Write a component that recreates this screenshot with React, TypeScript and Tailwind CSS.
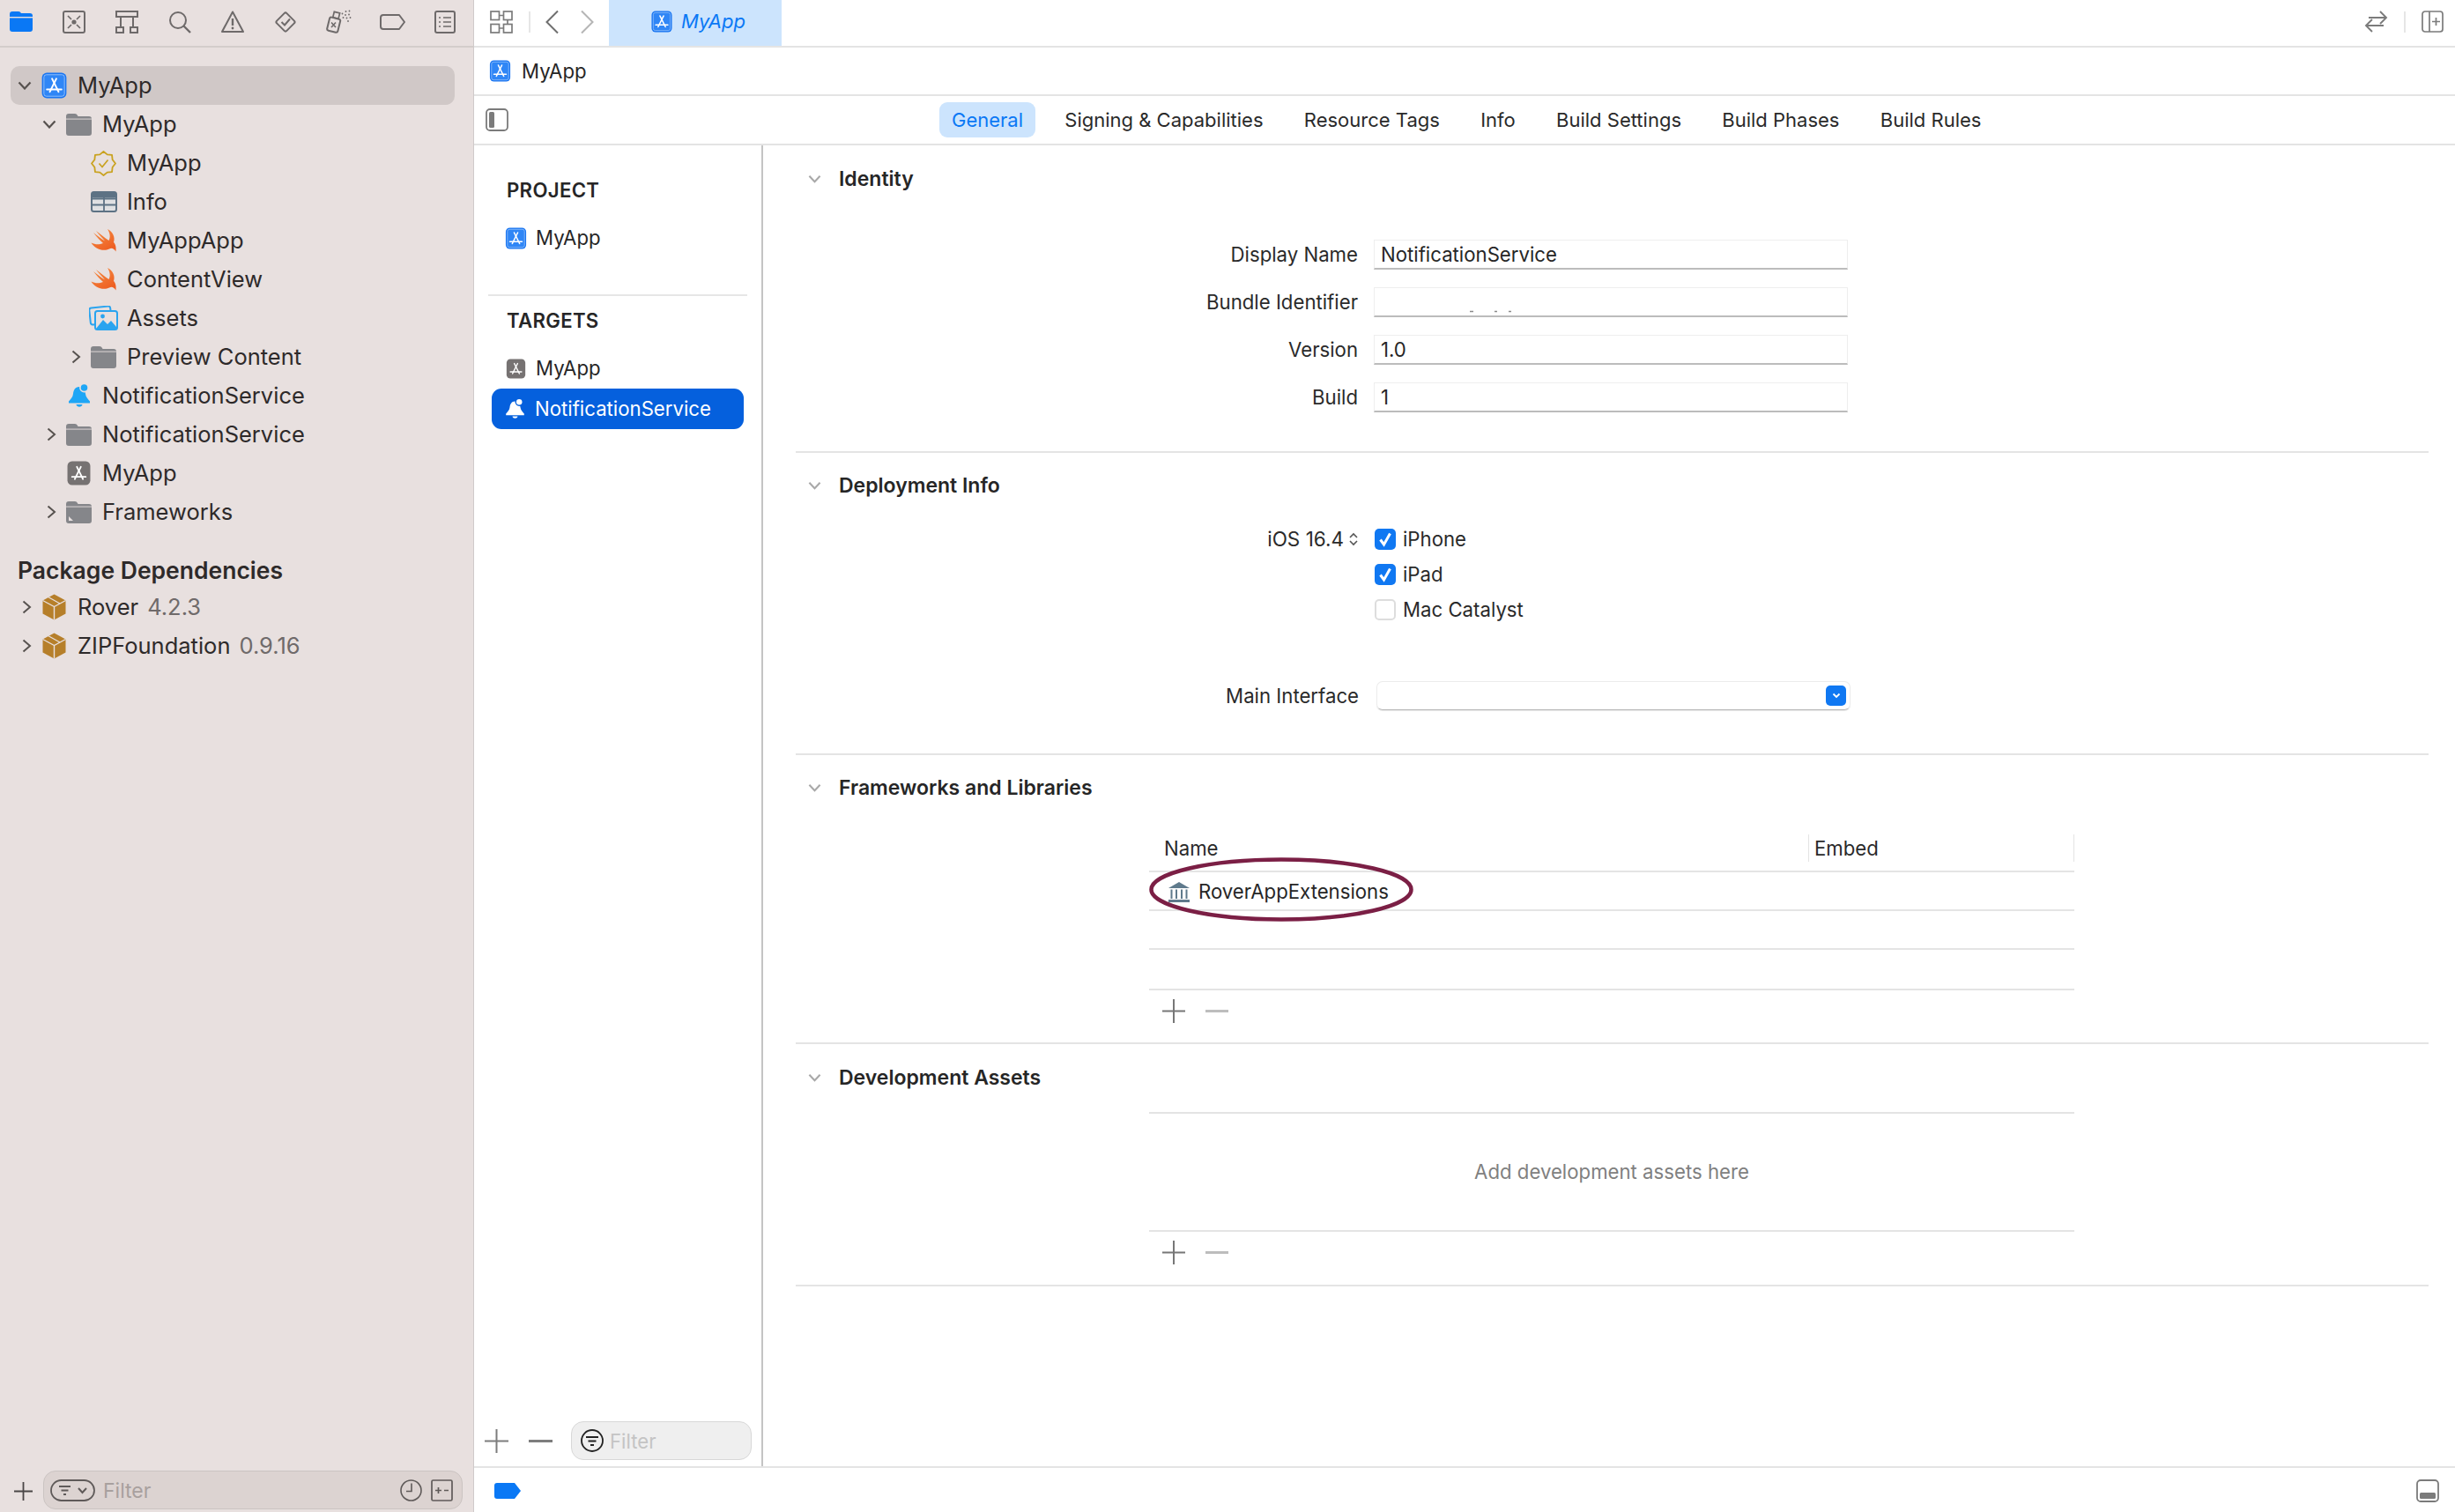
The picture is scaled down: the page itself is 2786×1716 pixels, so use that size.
import React from "react";

const G = "#6e6a6a";

function AppIcon({ gray = false, w = 26, h = 27 }: { gray?: boolean; w?: number; h?: number }) {
  return (
    <svg width={w} height={h} viewBox="0 0 26 27" className="shrink-0">
      <rect x="0.5" y="0.5" width="25" height="26" rx="5" fill={gray ? "#767272" : "#1a76f2"} />
      {!gray && <rect x="2.5" y="2.5" width="21" height="22" rx="2.5" fill="#2f86f6" stroke="#9cc6fa" strokeWidth="0.8" />}
      <g stroke="#fff" strokeWidth="1.7" strokeLinecap="round" fill="none">
        <path d="M10.8 6.5 L17.5 20" />
        <path d="M15.2 6.5 L8.5 20" />
        <path d="M5.5 17.5 H20.5" />
      </g>
    </svg>
  );
}

function Folder({ kind = "plain" }: { kind?: "plain" | "fw" }) {
  return (
    <svg width="29" height="25" viewBox="0 0 29 25" className="shrink-0">
      <path d="M0 3 Q0 0 3 0 H10 Q12 0 13 2 L13.5 3 H26 Q29 3 29 6 V22 Q29 25 26 25 H3 Q0 25 0 22 Z" fill="#85868a" />
      <rect x="0" y="5.5" width="29" height="1.2" fill="#e8e0df" opacity="0.75" />
      {kind === "fw" && <path d="M3 17 L3 22 H8 Z" fill="#e8e0df" />}
    </svg>
  );
}

function Swift() {
  return (
    <svg width="29" height="26" viewBox="0 0 29 26" className="shrink-0">
      <defs>
        <linearGradient id="sw" x1="0" y1="0" x2="0.6" y2="1">
          <stop offset="0" stopColor="#f58f45" />
          <stop offset="1" stopColor="#ee5f22" />
        </linearGradient>
      </defs>
      <path
        d="M0.5 15.5 C4 22 14 26 21 22.5 C24 21 26 22 28.5 25.5 C29 20 28 17 26 15 C28 9 25 3 19 0 C22 5 22.5 9 20.5 13 C16 10 10 5 6 2 C9 6 13 10 16 13.5 C12 11 7 7 3 4 C7 9 11 13.5 14 16 C9 18 5 17.5 0.5 15.5 Z"
        fill="url(#sw)"
      />
    </svg>
  );
}

function Badge() {
  const pts: string[] = [];
  for (let i = 0; i < 16; i++) {
    const r = i % 2 === 0 ? 13.5 : 11;
    const a = (i / 16) * Math.PI * 2 - Math.PI / 2;
    pts.push(`${14.5 + r * Math.cos(a)},${14.5 + r * Math.sin(a)}`);
  }
  return (
    <svg width="29" height="29" viewBox="0 0 29 29" className="shrink-0">
      <polygon points={pts.join(" ")} fill="none" stroke="#c9a21f" strokeWidth="1.8" strokeLinejoin="round" />
      <path d="M9.5 14.5 L13 18.5 L19.5 10.5" fill="none" stroke="#c9a21f" strokeWidth="1.7" />
    </svg>
  );
}

function Plist() {
  return (
    <svg width="30" height="24" viewBox="0 0 30 24" className="shrink-0">
      <rect x="1" y="1" width="28" height="22" rx="2.5" fill="#dfe0e2" stroke="#5d7284" strokeWidth="2" />
      <path d="M1 8.5 H29 M1 15.5 H29 M15 1 V23" stroke="#5d7284" strokeWidth="1.8" />
      <rect x="1" y="1" width="28" height="6.5" rx="2" fill="#5d7284" />
    </svg>
  );
}

function Assets() {
  return (
    <svg width="33" height="28" viewBox="0 0 33 28" className="shrink-0">
      <rect x="1" y="1.5" width="24" height="19" rx="2.5" fill="none" stroke="#2aa4ef" strokeWidth="2" transform="rotate(-6 13 11)" />
      <rect x="7" y="6" width="25" height="21" rx="2.5" fill="#e8e0df" stroke="#2aa4ef" strokeWidth="2" />
      <path d="M8 26 L16 16 L21 21 L25 17 L31 24 V26 Z" fill="#2aa4ef" />
      <circle cx="15.5" cy="12" r="2.4" fill="#2aa4ef" />
    </svg>
  );
}

function Bell({ color = "#1ea6f6", dot = "#e8e0df", w = 26, h = 28 }: { color?: string; dot?: string; w?: number; h?: number }) {
  return (
    <svg width={w} height={h} viewBox="0 0 26 28" className="shrink-0">
      <path d="M13 4 C8 4 6.5 8 6 12 C5.6 16 3 18 1 20.5 V22.5 H25 V20.5 C23 18 20.5 16 20 12 C19.5 8 18 4 13 4 Z" fill={color} />
      <path d="M9.5 24 H16.5 C16 27.5 10 27.5 9.5 24 Z" fill={color} />
      <circle cx="18.5" cy="5" r="5.4" fill={dot} />
      <circle cx="18.5" cy="5" r="3.8" fill={color} />
    </svg>
  );
}

function Pkg() {
  return (
    <svg width="27" height="30" viewBox="0 0 27 30" className="shrink-0">
      <polygon points="13.5,0.5 26.5,7.5 26.5,22.5 13.5,29.5 0.5,22.5 0.5,7.5" fill="#b67f2a" />
      <path d="M0.5 7.5 L13.5 14.5 L26.5 7.5 M13.5 14.5 V29.5" stroke="#e8e0df" strokeWidth="1.4" fill="none" />
      <path d="M7 3.8 L20 11" stroke="#e8e0df" strokeWidth="1.3" fill="none" />
    </svg>
  );
}

function ChevDown({ color = "#57524f", w = 16, h = 10 }: { color?: string; w?: number; h?: number }) {
  return (
    <svg width={w} height={h} viewBox="0 0 16 10" className="shrink-0">
      <path d="M1.5 1.5 L8 8.5 L14.5 1.5" fill="none" stroke={color} strokeWidth="2.2" />
    </svg>
  );
}

function ChevRight() {
  return (
    <svg width="11" height="16" viewBox="0 0 11 16" className="shrink-0">
      <path d="M1.5 1.5 L9 8 L1.5 14.5" fill="none" stroke="#57524f" strokeWidth="2" />
    </svg>
  );
}

function Row({
  depth,
  chev,
  icon,
  label,
  extra,
  selected = false,
}: {
  depth: 0 | 1 | 2;
  chev?: "down" | "right";
  icon: React.ReactNode;
  label: string;
  extra?: string;
  selected?: boolean;
}) {
  const pad = depth === 0 ? "pl-[8px]" : depth === 1 ? "pl-[36px]" : "pl-[64px]";
  return (
    <div className={`ml-[12px] mr-[21px] flex h-[44px] items-center rounded-[10px] ${pad} ${selected ? "bg-[#d0c8c7]" : ""}`}>
      <div className={`flex w-[27px] shrink-0 items-center ${chev === "down" ? "justify-start" : "justify-center pr-[6px]"}`}>
        {chev === "down" && <ChevDown />}
        {chev === "right" && <ChevRight />}
      </div>
      <div className="flex w-[29px] shrink-0 items-center justify-center">{icon}</div>
      <span className="ml-[12px] whitespace-nowrap text-[#2e2a2a]">{label}</span>
      {extra && <span className="ml-[10px] whitespace-nowrap text-[#6f6a6a]">{extra}</span>}
    </div>
  );
}

function NavIcons() {
  const s = { fill: "none", stroke: G, strokeWidth: 2 };
  return (
    <div className="flex h-[52px] items-center gap-[34px] pb-[3px] pl-[11px]">
      <svg width="26" height="23" viewBox="0 0 26 23" className="shrink-0">
        <path d="M0 3 Q0 0 3 0 H10 Q12 0 13 2 H23 Q26 2 26 5 V20 Q26 23 23 23 H3 Q0 23 0 20 Z" fill="#0a78f5" />
        <rect y="6" width="26" height="1.4" fill="#e8e0df" />
      </svg>
      <svg width="26" height="26" viewBox="0 0 26 26" className="shrink-0">
        <rect x="1" y="1" width="24" height="24" rx="2" {...s} />
        <circle cx="13" cy="13" r="2.6" fill={G} />
        <path d="M6 6 L10 10 M20 6 L16 10 M6 20 L10 16 M20 20 L16 16" {...s} strokeWidth={1.7} />
      </svg>
      <svg width="26" height="26" viewBox="0 0 26 26" className="shrink-0">
        <rect x="1" y="1" width="24" height="6" {...s} />
        <path d="M6 7 V18 M20 7 V18" {...s} />
        <rect x="1" y="19" width="8" height="6" {...s} />
        <rect x="17" y="19" width="8" height="6" {...s} />
      </svg>
      <svg width="26" height="26" viewBox="0 0 26 26" className="shrink-0">
        <circle cx="11" cy="11" r="9" {...s} />
        <path d="M17.5 17.5 L25 25" {...s} strokeWidth={2.4} />
      </svg>
      <svg width="26" height="25" viewBox="0 0 26 25" className="shrink-0">
        <path d="M13 1.5 L25 24 H1 Z" {...s} strokeLinejoin="round" />
        <path d="M13 9 V17" {...s} strokeWidth={2.4} />
        <circle cx="13" cy="20" r="1.4" fill={G} />
      </svg>
      <svg width="26" height="26" viewBox="0 0 26 26" className="shrink-0">
        <rect x="5" y="5" width="16" height="16" rx="2" transform="rotate(45 13 13)" {...s} />
        <path d="M8.5 13 L12 16.5 L18 9.5" {...s} />
      </svg>
      <svg width="29" height="27" viewBox="0 0 29 27" className="shrink-0 -ml-[1px] -mr-[2px]">
        <rect x="2.5" y="9.5" width="12.5" height="15.5" rx="2" transform="rotate(14 9 17)" {...s} />
        <rect x="8.5" y="3" width="6.5" height="6.5" transform="rotate(14 11.5 6)" {...s} strokeWidth={1.7} />
        <path d="M6 14.5 L11 20 M11 14.5 L6 20" {...s} strokeWidth={1.6} />
        <g fill={G}>
          <circle cx="18.5" cy="4.5" r="0.9" />
          <circle cx="22.5" cy="2" r="0.9" />
          <circle cx="26.5" cy="1.5" r="0.9" />
          <circle cx="22" cy="6" r="0.9" />
          <circle cx="26" cy="5.5" r="0.9" />
          <circle cx="19.5" cy="9" r="0.9" />
          <circle cx="23.5" cy="9.5" r="0.9" />
          <circle cx="27.5" cy="9" r="0.9" />
          <circle cx="25" cy="13" r="0.9" />
        </g>
      </svg>
      <svg width="29" height="18" viewBox="0 0 29 18" className="shrink-0 -mr-[1px]">
        <path d="M4 1 H22 L28 9 L22 17 H4 Q1 17 1 14 V4 Q1 1 4 1 Z" {...s} strokeLinejoin="round" />
      </svg>
      <svg width="24" height="26" viewBox="0 0 24 26" className="shrink-0">
        <rect x="1" y="1" width="22" height="24" rx="2" {...s} />
        <path d="M5 8 H7 M10 8 H19 M5 13 H7 M10 13 H19 M5 18 H7 M10 18 H19" {...s} strokeWidth={1.5} />
      </svg>
    </div>
  );
}

function Sidebar() {
  return (
    <aside className="flex h-full w-[538px] shrink-0 flex-col border-r border-[#cfcaca] bg-[#e8e0df] text-[25.5px]">
      <div className="border-b-2 border-[#d3cdcb]">
        <NavIcons />
      </div>
      <div className="flex flex-1 flex-col pt-[21px]">
        <Row depth={0} chev="down" icon={<AppIcon w={29} h={30} />} label="MyApp" selected />
        <Row depth={1} chev="down" icon={<Folder />} label="MyApp" />
        <Row depth={2} icon={<Badge />} label="MyApp" />
        <Row depth={2} icon={<Plist />} label="Info" />
        <Row depth={2} icon={<Swift />} label="MyAppApp" />
        <Row depth={2} icon={<Swift />} label="ContentView" />
        <Row depth={2} icon={<Assets />} label="Assets" />
        <Row depth={2} chev="right" icon={<Folder />} label="Preview Content" />
        <Row depth={1} icon={<Bell />} label="NotificationService" />
        <Row depth={1} chev="right" icon={<Folder />} label="NotificationService" />
        <Row depth={1} icon={<AppIcon gray w={27} h={28} />} label="MyApp" />
        <Row depth={1} chev="right" icon={<Folder kind="fw" />} label="Frameworks" />
        <div className="mt-[26px] flex h-[38px] items-center pl-[20px] text-[26.5px] font-semibold text-[#2e2a2a]">Package Dependencies</div>
        <Row depth={0} chev="right" icon={<Pkg />} label="Rover" extra="4.2.3" />
        <Row depth={0} chev="right" icon={<Pkg />} label="ZIPFoundation" extra="0.9.16" />
      </div>
      <div className="flex h-[47px] items-start pl-[16px]">
        <svg width="21" height="21" viewBox="0 0 21 21" className="mt-[13px] shrink-0">
          <path d="M10.5 0 V21 M0 10.5 H21" stroke="#4a4646" strokeWidth="1.8" />
        </svg>
        <div className="ml-[12px] flex h-[44px] w-[476px] items-center rounded-[14px] border border-[#cbc4c2] bg-[#dcd3d1] pl-[7px] pr-[10px]">
          <svg width="51" height="25" viewBox="0 0 51 25" className="shrink-0">
            <rect x="1" y="1" width="49" height="23" rx="11.5" fill="none" stroke="#5f5a59" strokeWidth="1.8" />
            <path d="M10 8 H23 M12.5 12.5 H20.5 M15 17 H18" stroke="#5f5a59" strokeWidth="1.8" />
            <path d="M32 10 L36.5 15 L41 10" fill="none" stroke="#5f5a59" strokeWidth="2" />
          </svg>
          <span className="ml-[9px] pt-[2px] text-[23px] text-[#a8a09e]">Filter</span>
          <svg width="25" height="25" viewBox="0 0 25 25" className="ml-auto shrink-0">
            <circle cx="12.5" cy="12.5" r="11.5" fill="none" stroke="#5f5a59" strokeWidth="1.6" />
            <path d="M13 4.5 V13.5 H7" fill="none" stroke="#5f5a59" strokeWidth="1.6" />
          </svg>
          <svg width="25" height="25" viewBox="0 0 25 25" className="ml-[10px] shrink-0">
            <rect x="1" y="1" width="23" height="23" rx="1.5" fill="none" stroke="#5f5a59" strokeWidth="1.7" />
            <path d="M5 12.5 H12 M8.5 9 V16 M15 12.5 H20" stroke="#5f5a59" strokeWidth="1.7" />
          </svg>
        </div>
      </div>
    </aside>
  );
}

function Toolbar() {
  return (
    <div className="flex h-[54px] shrink-0 items-center border-b-2 border-[#e4e4e4]">
      <svg width="26" height="26" viewBox="0 0 26 26" className="mb-[3px] ml-[18px] shrink-0">
        <g fill="none" stroke="#7b7b7b" strokeWidth="1.7">
          <rect x="1" y="1" width="9.5" height="9.5" />
          <rect x="15.5" y="1" width="9.5" height="9.5" />
          <rect x="1" y="15.5" width="9.5" height="9.5" />
          <rect x="15.5" y="15.5" width="9.5" height="9.5" />
          <path d="M10.5 5.5 H15.5 M20 10.5 V15.5 M10.5 20 H15.5" />
        </g>
      </svg>
      <div className="mb-[3px] ml-[18px] h-[24px] w-[2px] shrink-0 bg-[#e6e6e6]" />
      <svg width="17" height="28" viewBox="0 0 17 28" className="mb-[3px] ml-[16px] shrink-0">
        <path d="M15 1.5 L2.5 14 L15 26.5" fill="none" stroke="#6f6f6f" strokeWidth="2" />
      </svg>
      <svg width="17" height="28" viewBox="0 0 17 28" className="mb-[3px] ml-[23px] shrink-0">
        <path d="M2 1.5 L14.5 14 L2 26.5" fill="none" stroke="#b5b5b5" strokeWidth="2" />
      </svg>
      <div className="ml-[16px] flex h-[52px] w-[196px] shrink-0 items-center bg-[#cce4fd] pb-[3px] pl-[48px]">
        <AppIcon w={24} h={25} />
        <span className="ml-[10px] text-[22px] italic text-[#0a78f5]">MyApp</span>
      </div>
      <svg width="27" height="25" viewBox="0 0 27 25" className="mb-[3px] ml-auto shrink-0">
        <path d="M5 8 H25 M18 1 L25 8 L18 15 M22 17 H2 M9 10 L2 17 L9 24" fill="none" stroke="#7b7b7b" strokeWidth="1.9" />
      </svg>
      <div className="mb-[3px] ml-[18px] h-[24px] w-[2px] shrink-0 bg-[#e6e6e6]" />
      <svg width="25" height="25" viewBox="0 0 25 25" className="mb-[3px] ml-[18px] mr-[13px] shrink-0">
        <rect x="1" y="1" width="23" height="23" rx="3" fill="none" stroke="#7b7b7b" strokeWidth="1.7" />
        <path d="M9 1 V24 M16.5 8 V17 M12 12.5 H21" fill="none" stroke="#7b7b7b" strokeWidth="1.7" />
      </svg>
    </div>
  );
}

function Tabs() {
  const items = ["Signing & Capabilities", "Resource Tags", "Info", "Build Settings", "Build Phases", "Build Rules"];
  return (
    <div className="flex h-[56px] shrink-0 items-center border-b-2 border-[#e4e4e4] text-[22px]">
      <svg width="26" height="26" viewBox="0 0 26 26" className="ml-[13px] shrink-0">
        <rect x="1" y="1" width="24" height="24" rx="4" fill="none" stroke="#7b7b7b" strokeWidth="1.8" />
        <rect x="4" y="4" width="6" height="18" rx="1.5" fill="#7b7b7b" />
      </svg>
      <div className="ml-[489px] flex items-center gap-[20.3px]">
        <div className="flex h-[40px] items-center rounded-[9px] bg-[#cce4fd] px-[14px] text-[#0a78f5]">General</div>
        {items.map((t) => (
          <div key={t} className="whitespace-nowrap px-[13px] text-[#2a2a2a]">
            {t}
          </div>
        ))}
      </div>
    </div>
  );
}

function PlusMinus({ minus = "#bdbdbd", plus = "#777777" }: { minus?: string; plus?: string }) {
  return (
    <div className="flex h-[46px] items-center gap-[23px] pl-[15px]">
      <svg width="26" height="27" viewBox="0 0 26 27" className="shrink-0">
        <path d="M13 0 V27 M0 13.5 H26" stroke={plus} strokeWidth="2" />
      </svg>
      <svg width="26" height="3" viewBox="0 0 26 3" className="shrink-0">
        <rect width="26" height="3" fill={minus} />
      </svg>
    </div>
  );
}

function ProjectList() {
  return (
    <div className="flex w-[328px] shrink-0 flex-col border-r-2 border-[#c4c4c4]">
      <div className="mt-[35px] flex h-[32px] items-center pl-[37px] font-semibold tracking-[0.3px] text-[#262626]">PROJECT</div>
      <div className="ml-[20px] mt-[16px] flex h-[44px] items-center gap-[10px] pl-[15px]">
        <AppIcon w={25} h={25} />
        <span>MyApp</span>
      </div>
      <div className="ml-[16px] mt-[42px] h-[2px] w-[294px] bg-[#e6e6e6]" />
      <div className="mt-[12px] flex h-[32px] items-center pl-[37px] font-semibold tracking-[0.3px] text-[#262626]">TARGETS</div>
      <div className="ml-[20px] mt-[16px] flex h-[44px] items-center pl-[16px]">
        <AppIcon gray w={23} h={23} />
        <span className="ml-[11px]">MyApp</span>
      </div>
      <div className="ml-[20px] mt-[1px] flex h-[46px] w-[286px] items-center gap-[11px] rounded-[11px] bg-[#0560dd] pl-[15px] text-white">
        <Bell color="#ffffff" dot="#0560dd" w={23} h={24} />
        <span>NotificationService</span>
      </div>
      <div className="mt-auto flex items-center pb-[7px] pl-[12px]">
        <svg width="27" height="27" viewBox="0 0 27 27" className="shrink-0">
          <path d="M13.5 0 V27 M0 13.5 H27" stroke="#7d7d7d" strokeWidth="2" />
        </svg>
        <svg width="27" height="3" viewBox="0 0 27 3" className="ml-[23px] shrink-0">
          <rect width="27" height="3" fill="#7d7d7d" />
        </svg>
        <div className="ml-[21px] flex h-[44px] w-[205px] items-center rounded-[14px] border border-[#d8d8d8] bg-[#efefef] pl-[10px]">
          <svg width="26" height="26" viewBox="0 0 26 26" className="shrink-0">
            <circle cx="13" cy="13" r="12" fill="none" stroke="#222222" strokeWidth="1.8" />
            <path d="M6 9 H20 M8.5 13.5 H17.5 M11 18 H15" stroke="#222222" strokeWidth="1.9" />
          </svg>
          <span className="ml-[7px] pt-[2px] text-[#c4c4c4]">Filter</span>
        </div>
      </div>
    </div>
  );
}

function SectionTitle({ title }: { title: string }) {
  return (
    <div className="flex h-[40px] items-center pl-[14px]">
      <ChevDown color="#a8a8a8" w={15} h={10} />
      <span className="ml-[20px] text-[23px] font-semibold text-[#262626]">{title}</span>
    </div>
  );
}

function Field({ label, value, marks = false }: { label: string; value?: string; marks?: boolean }) {
  return (
    <div className="flex items-center">
      <div className="w-[638px] whitespace-nowrap text-right text-[#2a2a2a]">{label}</div>
      <div className="relative ml-[18px] flex h-[34px] w-[538px] items-center border border-b-2 border-[#eeeeee] border-b-[#bcbcbc] pl-[7px] text-[#262626]">
        {value}
        {marks && (
          <svg width="60" height="3" viewBox="0 0 60 3" className="absolute bottom-[3px] left-[108px]">
            <path d="M0 1.5 H4 M28 1.5 H31 M44 1.5 H47" stroke="#8a8a8a" strokeWidth="1.4" />
          </svg>
        )}
      </div>
    </div>
  );
}

function Check({ on, label }: { on: boolean; label: string }) {
  return (
    <div className="flex h-[24px] items-center">
      {on ? (
        <svg width="24" height="24" viewBox="0 0 24 24" className="shrink-0">
          <rect width="24" height="24" rx="5" fill="#1078f2" />
          <path d="M6.5 12.5 L10.5 18 L17.5 5.5" fill="none" stroke="#fff" strokeWidth="3" />
        </svg>
      ) : (
        <div className="h-[24px] w-[24px] shrink-0 rounded-[5px] border-2 border-[#dddddd] bg-white" />
      )}
      <span className="ml-[8px] whitespace-nowrap text-[#2a2a2a]">{label}</span>
    </div>
  );
}

function Editor() {
  return (
    <div className="min-w-0 flex-1 pl-[37px] pr-[30px]">
      <section className="h-[349px] border-b-2 border-[#e4e4e4] pt-[18px]">
        <SectionTitle title="Identity" />
        <div className="mt-[49px] flex flex-col gap-[20px]">
          <Field label="Display Name" value="NotificationService" />
          <Field label="Bundle Identifier" marks />
          <Field label="Version" value="1.0" />
          <Field label="Build" value="1" />
        </div>
      </section>
      <section className="h-[343px] border-b-2 border-[#e4e4e4] pt-[17px]">
        <SectionTitle title="Deployment Info" />
        <div className="mt-[29px] flex">
          <div className="flex h-[24px] w-[638px] items-center justify-end whitespace-nowrap text-[22.5px] text-[#2a2a2a]">
            iOS 16.4
            <svg width="10" height="16" viewBox="0 0 10 16" className="ml-[6px] shrink-0">
              <path d="M1 6 L5 2 L9 6 M1 10 L5 14 L9 10" fill="none" stroke="#555555" strokeWidth="1.6" />
            </svg>
          </div>
          <div className="ml-[19px] flex flex-col gap-[16px]">
            <Check on label="iPhone" />
            <Check on label="iPad" />
            <Check on={false} label="Mac Catalyst" />
          </div>
        </div>
        <div className="mt-[69px] flex items-center">
          <div className="w-[639px] text-right text-[#2a2a2a]">Main Interface</div>
          <div className="ml-[20px] flex h-[33px] w-[538px] items-center justify-end rounded-[7px] border border-[#ececec] border-b-[#b8b8b8] pr-[4px] shadow-[0_1px_1px_rgba(0,0,0,0.1)]">
            <div className="flex h-[23px] w-[23px] items-center justify-center rounded-[5px] bg-[#1078f2]">
              <svg width="10" height="7" viewBox="0 0 10 7">
                <path d="M1.5 1.5 L5 5 L8.5 1.5" fill="none" stroke="#fff" strokeWidth="1.8" />
              </svg>
            </div>
          </div>
        </div>
      </section>
      <section className="h-[328px] border-b-2 border-[#e4e4e4] pt-[17px]">
        <SectionTitle title="Frameworks and Libraries" />
        <div className="relative ml-[401px] mt-[33px] w-[1050px]">
          <div className="flex h-[43px] items-stretch border-b-2 border-[#e4e4e4] text-[#2a2a2a]">
            <div className="flex h-[31px] w-[748px] items-center pl-[17px]">Name</div>
            <div className="flex h-[31px] flex-1 items-center border-x border-[#e4e4e4] pl-[6px]">Embed</div>
          </div>
          <div className="flex h-[44px] items-center border-b-2 border-[#e4e4e4] pl-[22px] pt-[2px] text-[#262626]">
            <svg width="24" height="23" viewBox="0 0 24 23" className="shrink-0">
              <polygon points="12,0 24,7 0,7" fill="#5f7a8c" />
              <rect y="20" width="24" height="3" fill="#5f7a8c" />
              <path d="M3.5 8.5 V19 M9 8.5 V19 M15 8.5 V19 M20.5 8.5 V19" stroke="#5f7a8c" strokeWidth="2" />
            </svg>
            <span className="ml-[10px]">RoverAppExtensions</span>
          </div>
          <div className="h-[44px] border-b-2 border-[#e4e4e4]" />
          <div className="h-[46px] border-b-2 border-[#e4e4e4]" />
          <PlusMinus />
          <svg width="300" height="73" viewBox="0 0 300 73" className="pointer-events-none absolute left-0 top-[26px]">
            <ellipse cx="150" cy="36.5" rx="147.5" ry="34" fill="none" stroke="#7b1f45" strokeWidth="4.5" />
          </svg>
        </div>
      </section>
      <section className="h-[275px] border-b-2 border-[#e4e4e4] pt-[18px]">
        <SectionTitle title="Development Assets" />
        <div className="ml-[401px] mt-[19px] w-[1050px]">
          <div className="flex h-[136px] items-center justify-center border-y-2 border-[#e4e4e4] text-[#808080]">Add development assets here</div>
          <PlusMinus />
        </div>
      </section>
    </div>
  );
}

export default function App() {
  return (
    <div className="flex h-[1716px] w-[2786px] overflow-hidden bg-white font-[Inter,sans-serif] text-[22.2px] text-[#262626]">
      <Sidebar />
      <main className="flex min-w-0 flex-1 flex-col">
        <Toolbar />
        <div className="flex h-[55px] shrink-0 items-center border-b-2 border-[#e4e4e4] pl-[17px]">
          <AppIcon w={25} h={25} />
          <span className="ml-[12px]">MyApp</span>
        </div>
        <Tabs />
        <div className="flex min-h-0 flex-1">
          <ProjectList />
          <Editor />
        </div>
        <div className="flex h-[52px] shrink-0 items-center border-t-2 border-[#e4e4e4] pl-[23px] pt-[2px]">
          <svg width="30" height="18" viewBox="0 0 30 18" className="shrink-0">
            <path d="M3 0 H23 L30 9 L23 18 H3 Q0 18 0 15 V3 Q0 0 3 0 Z" fill="#0a78f5" />
          </svg>
          <svg width="26" height="26" viewBox="0 0 26 26" className="ml-auto mr-[18px] shrink-0">
            <rect x="1" y="1" width="24" height="24" rx="4" fill="none" stroke="#7b7b7b" strokeWidth="1.8" />
            <rect x="4" y="15" width="18" height="7" rx="1.5" fill="#7b7b7b" />
          </svg>
        </div>
      </main>
    </div>
  );
}
